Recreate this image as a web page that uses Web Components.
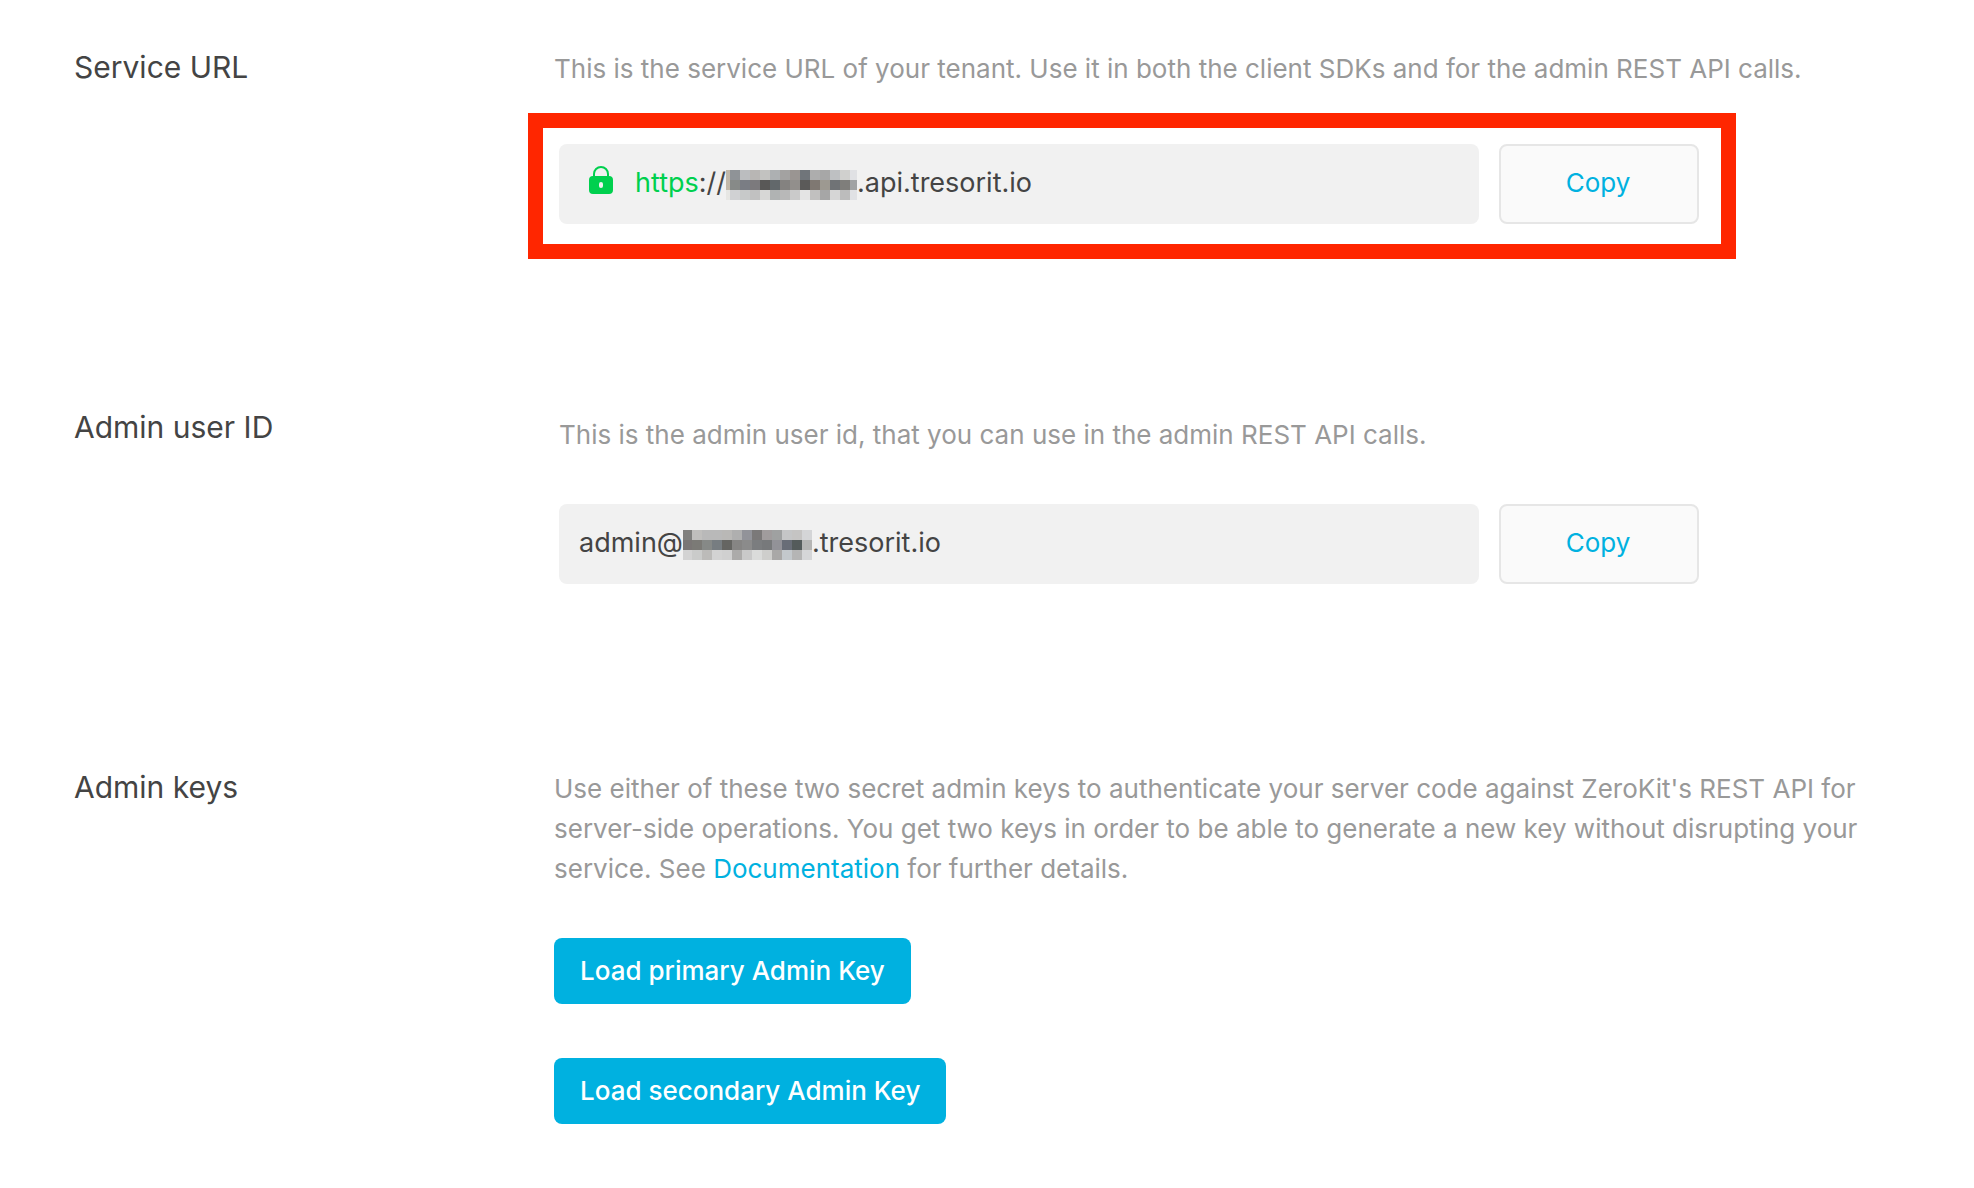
<!DOCTYPE html>
<html lang="en">
<head>
<meta charset="utf-8">
<title>Tenant settings</title>
<style>
  html { background: #fff; }
  body {
    margin: 0;
    font: 26px/40px Inter, "Liberation Sans", sans-serif;
    color: #444;
    --accent: #00b1e0;
    --muted: #999;
    --secure: #00d04e;
  }
</style>
</head>
<body>
<tenant-settings>
  <setting-row heading="Service URL">
    <setting-text>This is the service URL of your tenant. Use it in both the client SDKs and for the admin REST API calls.</setting-text>
    <copy-field highlighted label="Copy service URL">
      <lock-icon></lock-icon><secure-scheme>https</secure-scheme>://<masked-name variant="host"></masked-name>.api.tresorit.io
    </copy-field>
  </setting-row>
  <setting-row heading="Admin user ID">
    <setting-text inset>This is the admin user id, that you can use in the admin REST API calls.</setting-text>
    <copy-field label="Copy admin user ID">admin@<masked-name variant="user"></masked-name>.tresorit.io</copy-field>
  </setting-row>
  <setting-row heading="Admin keys">
    <setting-text>Use either of these two secret admin keys to authenticate your server code against ZeroKit's REST API for server-side operations. You get two keys in order to be able to generate a new key without disrupting your service. See <text-link href="#documentation">Documentation</text-link> for further details.</setting-text>
    <button-stack>
      <primary-button>Load primary Admin Key</primary-button>
      <primary-button>Load secondary Admin Key</primary-button>
    </button-stack>
  </setting-row>
</tenant-settings>

<script>
  const attach = (el, html) => { el.attachShadow({ mode: 'open' }).innerHTML = html; };

  customElements.define('tenant-settings', class extends HTMLElement {
    constructor() {
      super();
      attach(this, `
        <style>
          :host { display: block; padding: 47px 90px 0 74px; }
          main { display: flex; flex-direction: column; }
        </style>
        <main><slot></slot></main>`);
    }
  });

  customElements.define('setting-row', class extends HTMLElement {
    connectedCallback() {
      attach(this, `
        <style>
          :host { display: block; min-height: 360px; }
          section { display: grid; grid-template-columns: 480px minmax(0, 1fr); }
          h2 { margin: 0; font-size: 30px; line-height: 40px; font-weight: 400; }
        </style>
        <section aria-labelledby="title">
          <h2 id="title"></h2>
          <div><slot></slot></div>
        </section>`);
      this.shadowRoot.querySelector('h2').textContent = this.getAttribute('heading');
    }
  });

  customElements.define('setting-text', class extends HTMLElement {
    constructor() {
      super();
      attach(this, `
        <style>
          :host { display: block; padding-top: 2px; color: var(--muted); }
          :host([inset]) { padding: 8px 0 0 5px; }
          p { margin: 0; }
        </style>
        <p><slot></slot></p>`);
    }
  });

  customElements.define('text-link', class extends HTMLElement {
    connectedCallback() {
      attach(this, `
        <style>
          :host { display: inline; }
          a { color: var(--accent); text-decoration: none; }
          a:hover { text-decoration: underline; }
        </style><a><slot></slot></a>`);
      this.shadowRoot.querySelector('a').href = this.getAttribute('href');
    }
  });

  customElements.define('secure-scheme', class extends HTMLElement {
    constructor() {
      super();
      attach(this, `<style>:host { display: inline; color: var(--secure); }</style><slot></slot>`);
    }
  });

  customElements.define('lock-icon', class extends HTMLElement {
    constructor() {
      super();
      attach(this, `
        <style>
          :host { display: block; flex: none; margin: 0 22px 0 10px; }
          svg { display: block; margin-bottom: 6px; }
        </style>
        <svg width="24" height="28" viewBox="0 0 24 28" fill="none" aria-hidden="true">
          <path d="M5 11V8a7 7 0 0 1 14 0v3" stroke="#00d04e" stroke-width="2"/>
          <path fill="#00d04e" fill-rule="evenodd" d="M4 10h16a4 4 0 0 1 4 4v10a4 4 0 0 1-4 4H4a4 4 0 0 1-4-4V14a4 4 0 0 1 4-4zm8 6a2 2 0 0 0-2 2v2a2 2 0 0 0 4 0v-2a2 2 0 0 0-2-2z"/>
        </svg>`);
    }
  });

  /* Pixelated block that hides the tenant's name: three rows of 10px tiles. */
  const MASKS = {
    host: {
      first: 4, width: 131,
      rows: [
        ['#c2b8a9', '#8f9397', '#bbbdbf', '#b8b6b4', '#c2c2c0', '#adb0b2', '#a3a2a1', '#9a9592', '#70757a', '#adadad', '#a7a7a7', '#bec0c2', '#d0d0ce', '#e0e1e4'],
        ['#c2b8a9', '#878a88', '#7a7d84', '#7c7a7d', '#595857', '#62686b', '#848280', '#928f8c', '#5b5a59', '#7f7872', '#9d9991', '#707376', '#7f7e7b', '#a0a2a3'],
        ['#e7e7e4', '#d0d1d3', '#c7c9c9', '#c1c1c1', '#d7d7d6', '#b0b3b3', '#b8b8b8', '#cacaca', '#e4e4e4', '#c1c0bf', '#a6a6a6', '#d6d6d6', '#bcbcbc', '#e0e1e4']
      ]
    },
    user: {
      first: 9, width: 129,
      rows: [
        ['#80807e', '#c0bfbd', '#b9b9b9', '#b9b9b9', '#b9b8b6', '#afafaf', '#929399', '#7b7979', '#a09c9d', '#9fa1a1', '#c5c6c7', '#c5c4c3', '#d4d5d7'],
        ['#7a7675', '#7b7a76', '#868987', '#777d81', '#656562', '#868584', '#8b8b8b', '#7b7d7f', '#77797b', '#929298', '#686d77', '#545b5b', '#b5b5b4'],
        ['#d3d3d3', '#cacbca', '#bcbbb9', '#d3d3d3', '#d0d0d0', '#acabaa', '#c9c9c9', '#dadbda', '#cececc', '#a9a8a7', '#c3c8cc', '#b5b5b5', '#d5d6d8']
      ]
    }
  };

  customElements.define('masked-name', class extends HTMLElement {
    connectedCallback() {
      const { first, width, rows } = MASKS[this.getAttribute('variant')];
      const tiles = rows.map((row, y) => row.map((fill, i) => {
        const x = i ? first + (i - 1) * 10 : 0;
        const w = i ? Math.min(10, width - x) : first;
        return `<rect x="${x}" y="${y * 10}" width="${w}" height="10" fill="${fill}"/>`;
      }).join('')).join('');
      attach(this, `
        <style>
          :host { display: block; flex: none; padding-top: 4px; }
          svg { display: block; }
        </style>
        <svg width="${width}" height="30" viewBox="0 0 ${width} 30" shape-rendering="crispEdges" role="img" aria-label="hidden">${tiles}</svg>`);
    }
  });

  customElements.define('copy-field', class extends HTMLElement {
    connectedCallback() {
      attach(this, `
        <style>
          :host { display: block; max-width: 1140px; padding: 49px 0 0 5px; }
          :host([highlighted]) { max-width: 1208px; margin-left: -26px; padding: 24px 0 0; }
          .frame { display: flex; gap: 20px; }
          :host([highlighted]) .frame { border: 15px solid #ff2600; padding: 16px 22px 20px 16px; }
          .value {
            flex: 1; min-width: 0; box-sizing: border-box; height: 80px; padding: 0 20px 2px;
            display: flex; align-items: center; border-radius: 8px; background: #f1f1f1; font-size: 27px;
          }
          button {
            flex: none; width: 200px; height: 80px; padding: 0 2px 2px 0; border: 2px solid #e6e6e6;
            border-radius: 8px; background: #fafafa; color: var(--accent); font: inherit; cursor: pointer;
          }
        </style>
        <div class="frame">
          <div class="value"><slot></slot></div>
          <button type="button">Copy</button>
        </div>`);
      const button = this.shadowRoot.querySelector('button');
      button.title = this.getAttribute('label');
    }
  });

  customElements.define('button-stack', class extends HTMLElement {
    constructor() {
      super();
      attach(this, `
        <style>:host { display: flex; flex-direction: column; align-items: flex-start; gap: 54px; padding-top: 49px; }</style>
        <slot></slot>`);
    }
  });

  customElements.define('primary-button', class extends HTMLElement {
    constructor() {
      super();
      attach(this, `
        <style>
          :host { display: block; }
          button {
            display: block; height: 66px; padding: 0 26px; border: 0; border-radius: 8px;
            background: var(--accent); color: #fff; font: inherit; font-weight: 500; cursor: pointer;
          }
        </style>
        <button type="button"><slot></slot></button>`);
    }
  });
</script>
</body>
</html>
